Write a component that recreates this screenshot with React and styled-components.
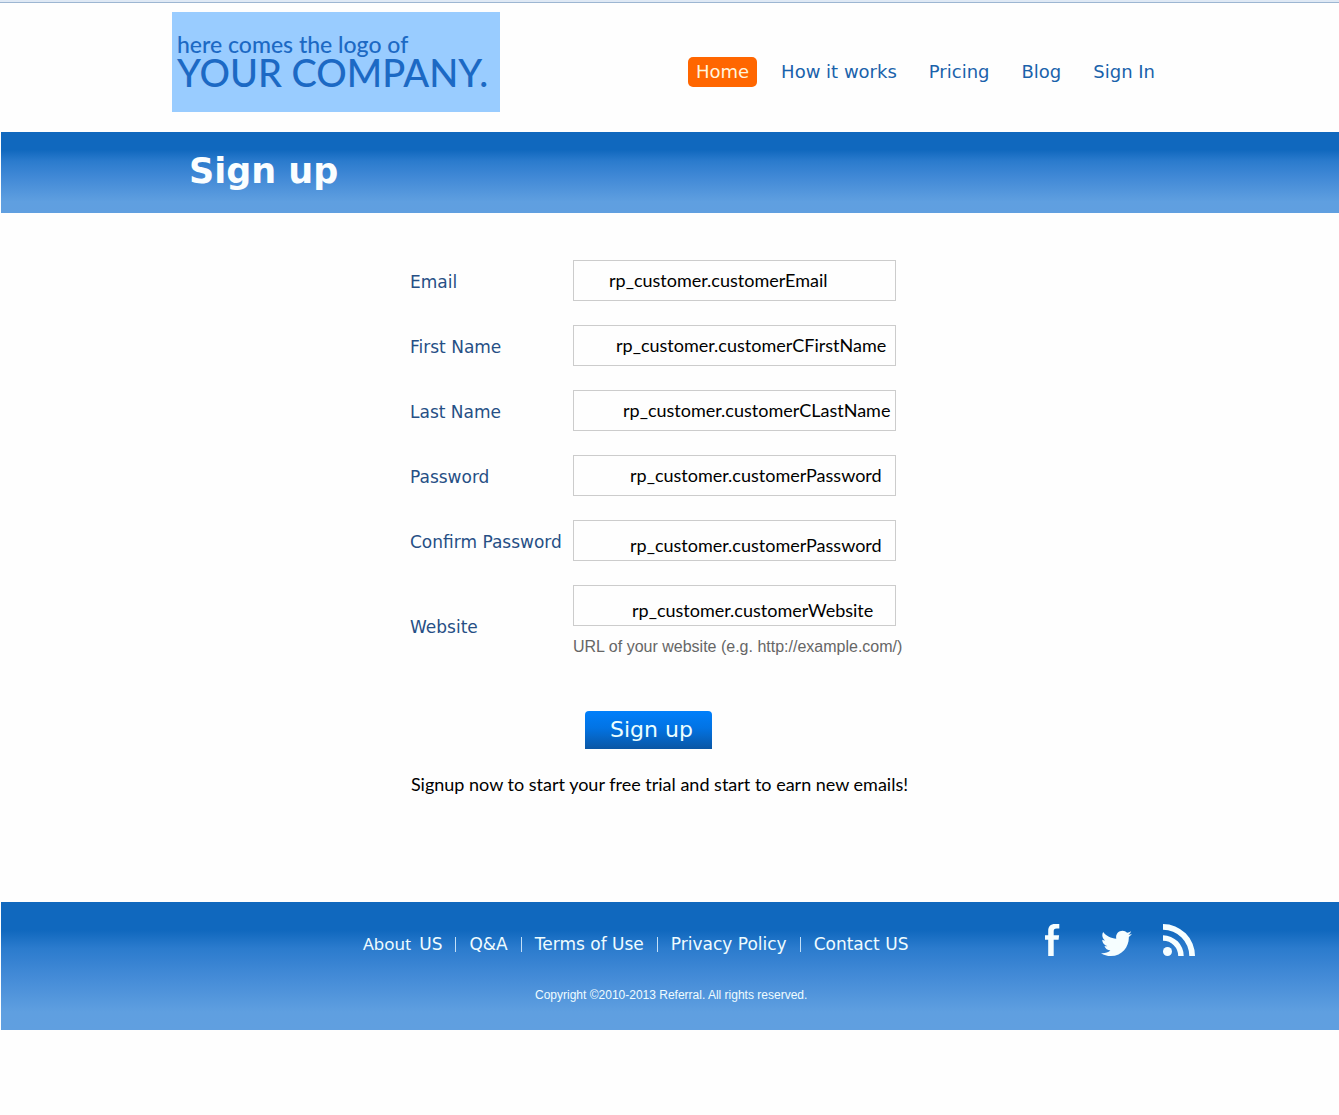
import React from "react";
import styled, { createGlobalStyle, css } from "styled-components";
import { FaTwitter } from "react-icons/fa";

const verdana = `"DejaVu Sans", Verdana, sans-serif`;
const calibri = `Lato, Calibri, sans-serif`;
const arial = `"Liberation Sans", Arial, sans-serif`;

const GlobalStyle = createGlobalStyle`
  *, *::before, *::after { box-sizing: border-box; }
  body { margin: 0; background: #fefefe; font-family: ${verdana}; }
  a { color: inherit; text-decoration: none; }
`;

const band = css`
  margin-left: 1px;
  background: linear-gradient(#1068be 0%, #1068be 22%, #2b7bcd 36%, #4189d6 56%, #5f9fe0 86%, #609fe0 100%);
`;

const Page = styled.div`
  border-top: 2px solid #dfe9f5;
`;

const Header = styled.header`
  display: flex;
  justify-content: space-between;
  align-items: flex-start;
  border-top: 1px solid #9db6d2;
  padding: 9px 176px 20px 172px;
`;

const Logo = styled.a`
  display: flex;
  flex-direction: column;
  width: 328px;
  height: 100px;
  padding: 20px 0 0 5px;
  background: #99ccff;
  color: #1c69c4;
  font-family: ${calibri};
  font-weight: 500;
  white-space: nowrap;
`;

const LogoSmall = styled.span`
  font-size: 23px;
  line-height: 24px;
`;

const LogoLarge = styled.span`
  font-size: 38px;
  line-height: 32px;
`;

const MainNav = styled.nav`
  display: flex;
  gap: 16px;
  padding-top: 45px;
`;

const NavLink = styled.a`
  padding: 0 8px;
  border-radius: 5px;
  background: ${(p) => (p.$active ? "#ff6600" : "transparent")};
  color: ${(p) => (p.$active ? "#fff4dc" : "#1a62ab")};
  font-size: 18px;
  line-height: 30px;
  white-space: nowrap;
`;

const TitleBand = styled.div`
  ${band}
  padding: 17px 188px 20px;
`;

const Title = styled.h1`
  margin: 0;
  color: #fafeff;
  font-size: 35px;
  line-height: 44px;
`;

const Main = styled.main`
  display: flex;
  flex-direction: column;
  align-items: center;
  padding: 47px 27px 105px 0;
  margin-left: 1px;
`;

const Form = styled.form`
  display: flex;
  flex-direction: column;
  gap: 24px;
`;

const Row = styled.div`
  display: grid;
  grid-template-columns: 163px 330px;
  align-items: center;
`;

const Label = styled.label`
  padding-top: 2px;
  color: #264f85;
  font-size: 17px;
  line-height: 24px;
  white-space: nowrap;
`;

const Control = styled.div`
  display: flex;
  flex-direction: column;
  align-items: flex-start;
`;

const Input = styled.input`
  width: 323px;
  height: 41px;
  padding: ${(p) => (p.$low ? "10px" : "0")} 0 2px ${(p) => p.$indent}px;
  border: 1px solid #cccccc;
  border-radius: 0;
  background: #fefefe;
  color: #000;
  font-family: ${calibri};
  font-size: 18px;
`;

const Hint = styled.span`
  padding: 9px 0 8px;
  color: #666;
  font-family: ${arial};
  font-size: 16px;
  line-height: 24px;
  white-space: nowrap;
`;

const SubmitButton = styled.button`
  align-self: flex-start;
  width: 127px;
  height: 38px;
  margin: 20px 0 0 175px;
  padding: 0 0 0 25px;
  border: 0;
  border-radius: 4px 4px 0 0;
  background: linear-gradient(#007ffb, #0273e3 45%, #0a56a4);
  color: #ecffff;
  font-family: ${verdana};
  font-size: 22px;
  line-height: 38px;
  text-align: left;
  white-space: nowrap;
`;

const Note = styled.p`
  margin: 23px 0 0;
  padding: 0 0 1px 6px;
  color: #000;
  font-family: ${calibri};
  font-size: 18px;
  line-height: 24px;
`;

const Footer = styled.footer`
  ${band}
  padding: 22px 144px 27px 362px;
  color: #effcff;
`;

const FooterRow = styled.div`
  display: flex;
  justify-content: space-between;
  align-items: flex-end;
`;

const FooterNav = styled.nav`
  display: flex;
  align-items: center;
  gap: 13px;
  font-size: 17px;
  line-height: 24px;
  white-space: nowrap;
`;

const Divider = styled.span`
  width: 1px;
  height: 15px;
  background: #c4e0f8;
`;

const Narrow = styled.span`
  margin-right: 8px;
  font-family: "Noto Sans", sans-serif;
`;

const Social = styled.div`
  display: flex;
  gap: 31px;
`;

const SocialLink = styled.a`
  display: flex;
  justify-content: center;
  align-items: flex-end;
  width: 32px;
  height: 32px;
  color: #f6feff;
`;

const Copyright = styled.p`
  margin: 31px 0 0;
  padding-left: 172px;
  font-family: ${arial};
  font-size: 12px;
  line-height: 16px;
`;

const fields = [
  { id: "email", label: "Email", value: "rp_customer.customerEmail", indent: 35 },
  { id: "first", label: "First Name", value: "rp_customer.customerCFirstName", indent: 42 },
  { id: "last", label: "Last Name", value: "rp_customer.customerCLastName", indent: 49 },
  { id: "password", label: "Password", value: "rp_customer.customerPassword", indent: 56 },
  { id: "confirm", label: "Confirm Password", value: "rp_customer.customerPassword", indent: 56, low: true },
  {
    id: "website",
    label: "Website",
    value: "rp_customer.customerWebsite",
    indent: 58,
    low: true,
    hint: "URL of your website (e.g. http://example.com/)",
  },
];

const menu = ["Home", "How it works", "Pricing", "Blog", "Sign In"];
const footerLinks = ["Q&A", "Terms of Use", "Privacy Policy", "Contact US"];

export default function App() {
  return (
    <Page>
      <GlobalStyle />
      <Header>
        <Logo href="#">
          <LogoSmall>here comes the logo of</LogoSmall>
          <LogoLarge>YOUR COMPANY.</LogoLarge>
        </Logo>
        <MainNav>
          {menu.map((item, i) => (
            <NavLink key={item} href="#" $active={i === 0}>
              {item}
            </NavLink>
          ))}
        </MainNav>
      </Header>
      <TitleBand>
        <Title>Sign up</Title>
      </TitleBand>
      <Main>
        <Form>
          {fields.map((f) => (
            <Row key={f.id}>
              <Label htmlFor={f.id}>{f.label}</Label>
              <Control>
                <Input id={f.id} type="text" defaultValue={f.value} $indent={f.indent} $low={f.low} />
                {f.hint && <Hint>{f.hint}</Hint>}
              </Control>
            </Row>
          ))}
          <SubmitButton type="button">Sign up</SubmitButton>
        </Form>
        <Note>Signup now to start your free trial and start to earn new emails!</Note>
      </Main>
      <Footer>
        <FooterRow>
          <FooterNav>
            <a href="#">
              <Narrow>About</Narrow>US
            </a>
            {footerLinks.map((item) => (
              <React.Fragment key={item}>
                <Divider />
                <a href="#">{item}</a>
              </React.Fragment>
            ))}
          </FooterNav>
          <Social>
            <SocialLink href="#" aria-label="Facebook">
              <svg width="16" height="32" viewBox="0 0 16 32" fill="currentColor">
                <path d="M14.3 0v4.6h-2.6c-2.4 0-3 .9-3 2.9v3.700h5.400l-.5 4.500H8.700V32H3.200V15.700H0v-4.500h3.200V7C3.200 2.300 5.500 0 10 0z" />
              </svg>
            </SocialLink>
            <SocialLink href="#" aria-label="Twitter">
              <FaTwitter size={31} viewBox="0 -48 512 512" />
            </SocialLink>
            <SocialLink href="#" aria-label="RSS">
              <svg width="32" height="32" viewBox="0 0 32 32" fill="currentColor">
                <circle cx="4.5" cy="27.5" r="4.5" />
                <path d="M0 11.300A20.700 20.700 0 0 1 20.700 32H15.200A15.200 15.200 0 0 0 0 16.800z" />
                <path d="M0 0A32 32 0 0 1 32 32H26.300A26.300 26.300 0 0 0 0 5.700z" />
              </svg>
            </SocialLink>
          </Social>
        </FooterRow>
        <Copyright>Copyright ©2010-2013 Referral. All rights reserved.</Copyright>
      </Footer>
    </Page>
  );
}
